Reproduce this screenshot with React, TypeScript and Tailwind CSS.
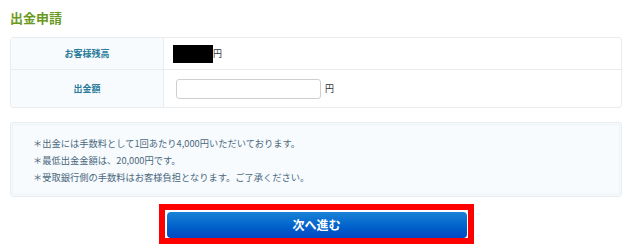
export default function App() {
  const notes = [
    '＊出金には手数料として1回あたり4,000円いただいております。',
    '＊最低出金金額は、20,000円です。',
    '＊受取銀行側の手数料はお客様負担となります。ご了承ください。',
  ];

  return (
    <div
      className="w-[640px] h-[245px] bg-white px-[10px] pt-[11px] overflow-hidden"
      style={{ fontFamily: '"Noto Sans CJK JP", "Noto Sans", sans-serif' }}
    >
      <h2 className="m-0 text-[13px] leading-[14px] font-bold text-[#6b9a22]">出金申請</h2>

      <div className="w-[612px] mt-[12px] border border-[#e8ecee] rounded-[3px]">
        <div className="flex h-[32px] border-b border-[#e8ecee]">
          <div className="w-[153px] shrink-0 flex items-center justify-center bg-[#f8fbfd] border-r border-[#e8ecee] text-[9px] font-bold text-[#2a7b9b]">
            お客様残高
          </div>
          <div className="flex items-center pl-[9px] text-[9px] text-[#333]">
            <span className="inline-block w-[40px] h-[18px] bg-black" />
            <span>円</span>
          </div>
        </div>
        <div className="flex h-[37px]">
          <div className="w-[153px] shrink-0 flex items-center justify-center bg-[#f8fbfd] border-r border-[#e8ecee] text-[9px] font-bold text-[#2a7b9b]">
            出金額
          </div>
          <div className="flex items-center pl-[12px] text-[9px] text-[#333]">
            <input
              className="w-[145px] h-[20px] border border-[#cfcfcf] rounded-[3px] bg-white outline-none"
              type="text"
            />
            <span className="ml-[4px]">円</span>
          </div>
        </div>
      </div>

      <div className="w-[612px] h-[75px] mt-[14px] border border-[#e6ecef] rounded-[3px] bg-[#f7fbfd] p-[1px]">
        <div className="h-full border border-[#eef3f5] rounded-[2px] pl-[20px] pt-[13px] flex flex-col gap-[6px]">
          {notes.map(n => (
            <div key={n} className="text-[9.25px] leading-[11px] text-[#4a687e]">
              {n}
            </div>
          ))}
        </div>
      </div>

      <div className="w-[612px] flex justify-center mt-[7px]">
        <div className="w-[315px] h-[40px] border-[6px] border-[#ff0000] p-[1px] pl-[2px]">
          <button className="w-[300px] h-full rounded-[4px] bg-gradient-to-b from-[#1a82d6] to-[#0046c2] text-white text-[12px] font-bold">
            次へ進む
          </button>
        </div>
      </div>
    </div>
  );
}
